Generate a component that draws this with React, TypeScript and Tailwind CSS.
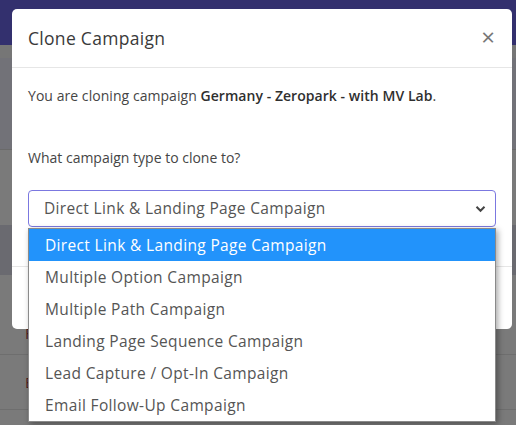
import React from "react";

const options = [
  "Direct Link & Landing Page Campaign",
  "Multiple Option Campaign",
  "Multiple Path Campaign",
  "Landing Page Sequence Campaign",
  "Lead Capture / Opt-In Campaign",
  "Email Follow-Up Campaign",
];

export default function App() {
  return (
    <div className="relative w-[516px] h-[425px] overflow-hidden bg-[#7a7a7a]" style={{ fontFamily: "'Open Sans', 'Noto Sans', sans-serif" }}>
      {/* backdrop page */}
      <div className="flex flex-col">
        <div className="h-[45px] bg-[#33306e]" />
        <div className="h-[13px] bg-[#767676]" />
        <div className="h-[92px] bg-[#727278] border-b border-[#6a6a6a]" />
        <div className="h-[75px] bg-[#7a7a7a]" />
        <div className="h-[50px] bg-[#6a6a70]" />
        <div className="h-[80px] bg-[#7a7a7a] border-b border-[#6e6e6e] flex items-end pb-[10px] pl-[25px] text-[15px] text-[#4a1e1e]">F</div>
        <div className="h-[55px] bg-[#7a7a7a] border-b border-[#6e6e6e] flex items-center pl-[25px] text-[15px] text-[#4a1e1e]">E</div>
      </div>

      {/* modal */}
      <div className="absolute left-[12px] top-[9px] w-[500px] h-[320px] bg-white rounded-[5px] flex flex-col">
        <div className="h-[59px] px-4 flex items-center justify-between border-b border-[#e6e6e6]">
          <span className="text-[17.5px] text-[#3a3a3a] tracking-[0.3px]">Clone Campaign</span>
          <span className="text-[24px] leading-none text-[#777] mr-[1px] -mt-[2px]">×</span>
        </div>
        <div className="px-4 pt-[17px] text-[14px] text-[#454545]">
          <p className="h-[20px] tracking-[0.05px]">
            You are cloning campaign <b className="font-semibold text-[#2f2f2f]">Germany - Zeropark - with MV Lab</b>.
          </p>
          <p className="mt-[42px] h-[20px]">What campaign type to clone to?</p>
          <div className="mt-[23px] h-[37px] border border-[#7b78e0] rounded-[4px] flex items-center justify-between pl-[15px] pr-[9px] text-[15.5px] tracking-[0.35px] text-[#555]">
            <span>Direct Link &amp; Landing Page Campaign</span>
            <svg width="11" height="8" viewBox="0 0 11 8"><path d="M1.5 1.8 L5.5 5.8 L9.5 1.8" stroke="#444" strokeWidth="2" fill="none" /></svg>
          </div>
        </div>
        <div className="mt-[39px] border-t border-[#e6e6e6]" />
      </div>

      {/* dropdown */}
      <div className="absolute left-[28px] top-[228px] w-[468px] bg-white border border-[#8a8a8a] shadow-[2px_2px_6px_rgba(0,0,0,0.35)]">
        {options.map((o, i) => (
          <div
            key={o}
            className={
              i === 0
                ? "h-[32px] flex items-center pl-[16px] pt-[2px] text-[15.5px] tracking-[0.35px] bg-[#2293fb] text-white"
                : "h-[32px] flex items-center pl-[16px] pt-[2px] text-[15.5px] tracking-[0.35px] text-[#555]"
            }
          >
            {o}
          </div>
        ))}
      </div>
    </div>
  );
}
